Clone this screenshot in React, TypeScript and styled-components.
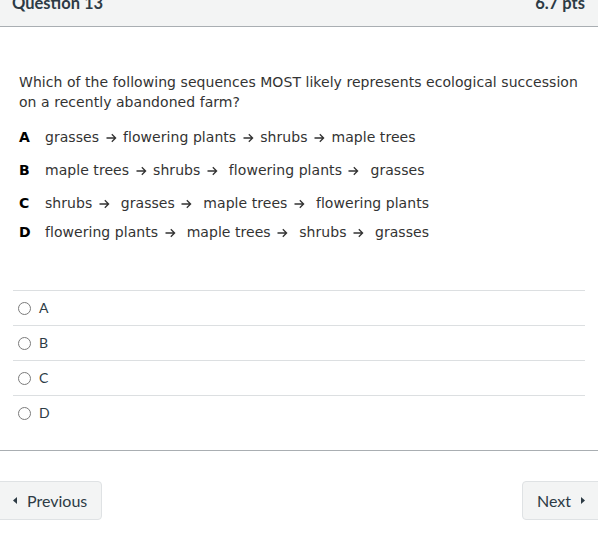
import React from "react";
import styled, { createGlobalStyle } from "styled-components";

const GlobalStyle = createGlobalStyle`
  body {
    margin: 0;
    background: #ffffff;
    overflow: hidden;
    font-family: Lato, "Liberation Sans", sans-serif;
  }
`;

// "|" marks where an arrow goes; spacing around it is kept as typed
const options = [
  { letter: "A", text: "grasses | flowering plants | shrubs | maple trees", gap: 15 },
  { letter: "B", text: "maple trees | shrubs |  flowering plants |  grasses", gap: 13 },
  { letter: "C", text: "shrubs |  grasses |  maple trees |  flowering plants", gap: 13 },
  { letter: "D", text: "flowering plants |  maple trees |  shrubs |  grasses", gap: 9 },
];

const answers = ["A", "B", "C", "D"];

function Arrow() {
  return (
    <ArrowIcon viewBox="0 0 11 10" width="11" height="10" aria-label="→">
      <path
        d="M0.5 5 H9.5 M5.8 1.2 L9.6 5 L5.8 8.8"
        fill="none"
        stroke="#333333"
        strokeWidth="1.3"
      />
    </ArrowIcon>
  );
}

function Sequence({ text }: { text: string }) {
  const parts = text.split("|");
  return (
    <OptionText>
      {parts.map((p, i) => (
        <React.Fragment key={i}>
          {p}
          {i < parts.length - 1 && <Arrow />}
        </React.Fragment>
      ))}
    </OptionText>
  );
}

export default function App() {
  return (
    <>
      <GlobalStyle />
      <Page>
        <Header>
          <Title>Question 13</Title>
          <Points>6.7 pts</Points>
        </Header>

        <QuestionBody>
          <Prompt>
            Which of the following sequences MOST likely represents ecological
            succession on a recently abandoned farm?
          </Prompt>
          {options.map((o) => (
            <OptionRow key={o.letter} gap={o.gap}>
              <OptionLetter>{o.letter}</OptionLetter>
              <Sequence text={o.text} />
            </OptionRow>
          ))}
        </QuestionBody>

        <AnswerList>
          {answers.map((a) => (
            <AnswerRow key={a}>
              <Radio />
              <AnswerLabel>{a}</AnswerLabel>
            </AnswerRow>
          ))}
        </AnswerList>

        <Footer>
          <NavButton side="left">
            <Caret viewBox="0 0 4 7" width="4" height="7">
              <path d="M4 0 L0 3.5 L4 7 Z" fill="#2d3b45" />
            </Caret>
            Previous
          </NavButton>
          <NavButton side="right">
            Next
            <Caret viewBox="0 0 4 7" width="4" height="7">
              <path d="M0 0 L4 3.5 L0 7 Z" fill="#2d3b45" />
            </Caret>
          </NavButton>
        </Footer>
      </Page>
    </>
  );
}

interface OptionRowProps {
  gap: number;
}

interface NavButtonProps {
  side: "left" | "right";
}

const Page = styled.div`
  width: 598px;
`;

const Header = styled.div`
  margin-top: -16px;
  padding: 9px 13px 13px 12px;
  background: #f3f4f4;
  border-bottom: 1px solid #a9aeb2;
  display: flex;
  justify-content: space-between;
  line-height: 20px;
  color: #2d3b45;
`;

const Title = styled.span`
  font-size: 16.5px;
  font-weight: 700;
`;

const Points = styled.span`
  font-size: 16.5px;
  font-weight: 700;
`;

const QuestionBody = styled.div`
  padding: 45px 15px 0 19px;
  color: #333333;
  font-family: Verdana, "DejaVu Sans", sans-serif;
  font-size: 14px;
  letter-spacing: 0.05px;
  line-height: 20px;
`;

const Prompt = styled.p`
  margin: 0;
`;

const OptionRow = styled.div<OptionRowProps>`
  display: flex;
  margin-top: ${({ gap }) => gap}px;
`;

const OptionLetter = styled.span`
  width: 26px;
  flex: none;
  font-weight: 700;
  color: #000000;
`;

const OptionText = styled.span`
  white-space: pre;
`;

const ArrowIcon = styled.svg`
  display: inline-block;
  vertical-align: -1px;
  margin: 0 2px;
`;

const AnswerList = styled.div`
  margin: 48px 13px 0 13px;
`;

const AnswerRow = styled.div`
  height: 32px;
  border-top: 1px solid #dcdfe1;
  display: flex;
  align-items: center;
  padding-left: 5px;
  padding-top: 2px;
`;

const Radio = styled.span`
  width: 11px;
  height: 11px;
  border: 1px solid #7b7b7b;
  border-radius: 50%;
  flex: none;
  margin-top: -1px;
`;

const AnswerLabel = styled.span`
  margin-left: 8px;
  margin-top: -4px;
  font-size: 14px;
  color: #2d3b45;
`;

const Footer = styled.div`
  margin-top: 20px;
  border-top: 1px solid #a9aeb2;
  padding-top: 30px;
  display: flex;
  justify-content: space-between;
`;

const NavButton = styled.button<NavButtonProps>`
  height: 39px;
  display: flex;
  align-items: center;
  gap: 10px;
  background: #f3f4f4;
  border: 1px solid #dfe2e4;
  border-radius: 4px;
  color: #2d3b45;
  font-family: Lato, "Liberation Sans", sans-serif;
  font-size: 16px;
  padding: ${({ side }) => (side === "left" ? "0 14px 0 16px" : "0 22px 0 14px")};
  margin-left: ${({ side }) => (side === "left" ? "-4px" : "0")};
  margin-right: ${({ side }) => (side === "right" ? "-10px" : "0")};
`;

const Caret = styled.svg`
  flex: none;
`;
